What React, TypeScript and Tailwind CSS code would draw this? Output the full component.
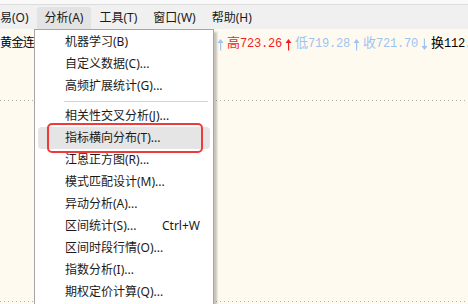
import { FC, ReactNode } from "react";

type MenuRow = { label: string; shortcut?: string; active?: boolean } | "sep";

const rows: MenuRow[] = [
  { label: "机器学习(B)" },
  { label: "自定义数据(C)..." },
  { label: "高频扩展统计(G)..." },
  "sep",
  { label: "相关性交叉分析(J)..." },
  { label: "指标横向分布(T)...", active: true },
  { label: "江恩正方图(R)..." },
  { label: "模式匹配设计(M)..." },
  { label: "异动分析(A)..." },
  { label: "区间统计(S)...", shortcut: "Ctrl+W" },
  { label: "区间时段行情(O)..." },
  { label: "指数分析(I)..." },
  { label: "期权定价计算(Q)..." },
  { label: "期货套利分析(P)..." },
];

const menuBar = [
  { label: "交易(O)" },
  { label: "分析(A)", open: true },
  { label: "工具(T)" },
  { label: "窗口(W)" },
  { label: "帮助(H)" },
];

const uiFont = {
  fontFamily: '"Noto Sans", "Noto Sans CJK SC", sans-serif',
};
const monoFont = {
  fontFamily: '"Liberation Mono", "Noto Sans CJK SC", monospace',
};

const Dotted: FC = () => (
  <div className="h-px w-full bg-[repeating-linear-gradient(to_right,#b9b2a4_0_1px,transparent_1px_4px)]" />
);

// full-width cell for CJK glyphs, like the song-style quote font
const Cell: FC<{ children: ReactNode }> = ({ children }) => (
  <span className="inline-block w-[13px] text-center text-[13px]">{children}</span>
);

const Arrow: FC<{ down?: boolean }> = ({ down }) => (
  <span className="inline-flex w-[13px] justify-center">
    <svg
      width="7"
      height="13"
      viewBox="0 0 7 13"
      className={down ? "rotate-180" : ""}
    >
      <path d="M3.5 1 L6.5 5 L0.5 5 Z" fill="currentColor" />
      <rect x="3" y="4" width="1.2" height="8.5" fill="currentColor" />
    </svg>
  </span>
);

const Num: FC<{ children: ReactNode }> = ({ children }) => (
  <span className="tracking-[-0.2px]">{children}</span>
);

const App: FC = () => {
  return (
    <div
      className="relative w-[468px] h-[304px] overflow-hidden bg-[#fffaef] text-[12px] text-[#1a1a1a]"
      style={uiFont}
    >
      {/* title strip + menu bar */}
      <div className="h-[5px] bg-[#f9f9f9] border-b border-[#dcdcdc]" />
      <div className="h-[24px] bg-[#f0f0f0] flex items-end -ml-[20px]">
        {menuBar.map((m) => (
          <div
            key={m.label}
            className={
              m.open
                ? "h-[22px] px-2 flex items-center bg-[#e3e3e3] rounded-t-[3px]"
                : "h-[22px] px-2 flex items-center"
            }
          >
            {m.label}
          </div>
        ))}
      </div>

      {/* chart area */}
      <div className="flex flex-col">
        <div
          className="h-[30px] flex items-center whitespace-nowrap text-[12px]"
          style={monoFont}
        >
          <span className="w-[214px] shrink-0 overflow-hidden text-black text-[12px] tracking-[-0.6px]">
            黄金连续 开722.10 今722.80
          </span>
          <span className="flex items-center text-[#9ec3ef]">
            <Arrow />
          </span>
          <span className="flex items-center text-[#f01e1e]">
            <Cell>高</Cell>
            <Num>723.26</Num>
            <Arrow />
          </span>
          <span className="flex items-center text-[#9ec3ef]">
            <Cell>低</Cell>
            <Num>719.28</Num>
            <Arrow />
            <Cell>收</Cell>
            <Num>721.70</Num>
            <Arrow down />
          </span>
          <span className="flex items-center text-black">
            <Cell>换</Cell>
            <Num>112.45%</Num>
          </span>
        </div>
        <div className="h-[41px]" />
        <Dotted />
        <div className="h-[200px]" />
        <Dotted />
      </div>

      {/* dropdown */}
      <div className="absolute left-[34px] top-[29px] w-[180px] bg-white border border-[#a6a6a6] shadow-[3px_3px_2px_rgba(0,0,0,0.22)] py-[1px] px-[3px]">
        {rows.map((r, i) =>
          r === "sep" ? (
            <div key={i} className="h-[8px] flex items-center pl-[26px] pr-[2px]">
              <div className="h-px w-full bg-[#d4d4d4]" />
            </div>
          ) : (
            <div
              key={i}
              className={
                r.active
                  ? "h-[22px] flex items-center pl-[27px] pr-[10px] rounded-[4px] bg-[#e5e5e5]"
                  : "h-[22px] flex items-center pl-[27px] pr-[10px]"
              }
            >
              <span>{r.label}</span>
              {r.shortcut && <span className="ml-auto">{r.shortcut}</span>}
            </div>
          )
        )}
      </div>

      {/* annotation box */}
      <div className="absolute left-[47px] top-[123px] w-[156px] h-[30px] border-2 border-[#f03a3a] rounded-[5px]" />
    </div>
  );
};

export default App;
